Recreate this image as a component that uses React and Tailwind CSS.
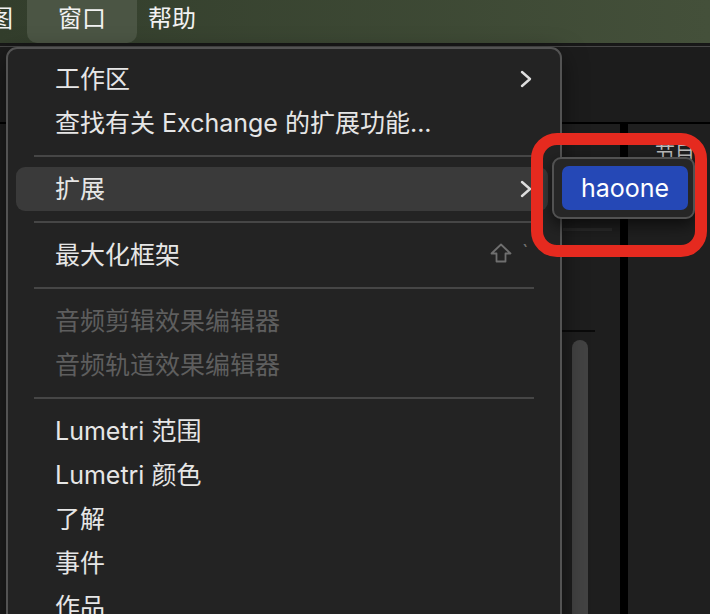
import React from "react";

const FONT = { fontFamily: 'Inter, "Noto Sans CJK SC", "Noto Sans", sans-serif' };

function Chevron() {
  return (
    <svg width="12" height="18" viewBox="0 0 12 18" className="shrink-0">
      <polyline points="2,2 10,9 2,16" fill="none" stroke="#dedede" strokeWidth="2.4" strokeLinecap="round" strokeLinejoin="round" />
    </svg>
  );
}

function ShiftIcon() {
  return (
    <svg width="22" height="20" viewBox="0 0 22 20" className="shrink-0">
      <path d="M11 1.5 L20.5 10.5 H15.5 V18.5 H6.5 V10.5 H1.5 Z" fill="none" stroke="#6f6f6f" strokeWidth="1.8" strokeLinejoin="round" />
    </svg>
  );
}

function Row({ label, chevron, shortcut, disabled, active }) {
  return (
    <div
      className={
        "ml-2 mr-[12px] h-[44px] flex items-center pl-[39px] pr-[16px] rounded-[9px] " +
        (active ? "bg-[#3a3a3a]" : "")
      }
    >
      <span
        className={
          "flex-1 text-[25px] leading-[44px] whitespace-nowrap " +
          (disabled ? "text-[#5e5e5e]" : "text-[#e6e6e6]")
        }
      >
        {label}
      </span>
      {chevron && <Chevron />}
      {shortcut && (
        <div className="flex items-start h-[24px] -mt-[1px]">
          <ShiftIcon />
          <span className="ml-[10px] w-[10px] text-[20px] leading-[18px] text-[#6f6f6f]">`</span>
        </div>
      )}
    </div>
  );
}

function Sep() {
  return (
    <div className="pt-[10px] pb-[10px] ml-[26px] mr-[26px]">
      <div className="h-[2px] bg-[#464646]" />
    </div>
  );
}

export default function App() {
  return (
    <div className="relative w-[710px] h-[614px] overflow-hidden bg-[#1c1c1c] flex flex-col" style={FONT}>
      {/* menu bar */}
      <div className="h-[44px] shrink-0 flex items-start bg-gradient-to-r from-[#333e2c] to-[#44503a] border-b border-[#161616] text-[24px] text-[#f2f2f2]">
        <span className="ml-[-11px] leading-[38px]">图</span>
        <div className="ml-[14px] w-[110px] h-[43px] pl-[31px] rounded-b-[10px] bg-[#4b5544] leading-[38px]">窗口</div>
        <span className="ml-[11px] leading-[38px]">帮助</span>
      </div>
      <div className="h-[2px] shrink-0 bg-[#181818]" />
      <div className="h-[1px] shrink-0 bg-[#474747]" />
      {/* background app */}
      <div className="h-[75px] shrink-0 bg-[#1c1c1c]" />
      <div className="h-[2px] shrink-0 bg-black" />
      <div className="flex-1 flex">
        <div className="flex-1 flex bg-[#1e1e1e]">
          <div className="flex-1" />
          <div className="w-[58px] flex flex-col">
            <div className="h-[104px]" />
            <div className="h-[3px] w-[49px] ml-[1px] bg-[#2a2a2a]" />
            <div className="h-[99px]" />
            <div className="h-[2px] w-[33px] bg-[#0a0a0a]" />
            <div className="h-[8px]" />
            <div className="flex-1 w-[16px] ml-[10px] rounded-t-full bg-[#434343]" />
          </div>
        </div>
        <div className="w-[8px] bg-black" />
        <div className="w-[82px] bg-[#1f1f1f]">
          <div className="mt-[18px] ml-[27px] text-[20px] leading-[24px] text-[#bdbdbd] whitespace-nowrap">节目</div>
        </div>
      </div>

      {/* dropdown menu */}
      <div className="absolute left-[6px] top-[47px] w-[556px] h-[600px] rounded-t-[11px] border-2 border-[#535353] bg-[#232323] pt-[8px] shadow-[0_8px_24px_rgba(0,0,0,0.5)]">
        <Row label="工作区" chevron />
        <Row label="查找有关 Exchange 的扩展功能..." />
        <Sep />
        <Row label="扩展" chevron active />
        <Sep />
        <Row label="最大化框架" shortcut />
        <Sep />
        <Row label="音频剪辑效果编辑器" disabled />
        <Row label="音频轨道效果编辑器" disabled />
        <Sep />
        <Row label="Lumetri 范围" />
        <Row label="Lumetri 颜色" />
        <Row label="了解" />
        <Row label="事件" />
        <Row label="作品" />
      </div>

      {/* submenu */}
      <div className="absolute left-[552px] top-[157px] w-[143px] h-[62px] rounded-[9px] border-2 border-[#525252] bg-[#262626] pl-[8px] pt-[7px] shadow-[0_6px_16px_rgba(0,0,0,0.6)]">
        <div className="w-[126px] h-[44px] rounded-[7px] bg-[#2548b6] flex items-center justify-center text-[25px] leading-[44px] text-white">
          haoone
        </div>
      </div>

      {/* red annotation */}
      <div className="absolute left-[531px] top-[133px] w-[176px] h-[124px] rounded-[26px] border-[12px] border-[#e52a1f]" />
    </div>
  );
}
